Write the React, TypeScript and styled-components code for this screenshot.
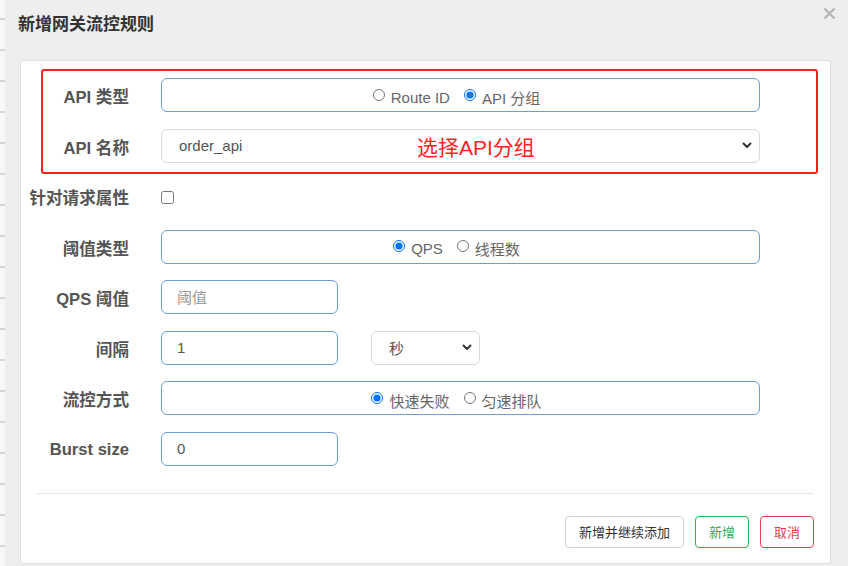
import React from 'react';
import styled, { createGlobalStyle, css } from 'styled-components';

const GlobalStyle = createGlobalStyle`
  html, body {
    margin: 0;
    padding: 0;
    background: #eeeeee;
  }
  * {
    box-sizing: border-box;
  }
  body {
    font-family: "Liberation Sans", "Noto Sans CJK SC", sans-serif;
    color: #555;
  }
`;

const Page = styled.div`
  display: flex;
  width: 848px;
  height: 566px;
  overflow: hidden;
`;

// the page behind the modal peeks out on the far left
const BackdropStrip = styled.div`
  width: 5px;
  flex-shrink: 0;
  background:
    repeating-linear-gradient(180deg, transparent 0 18px, #d3d6dc 18px 20px, transparent 20px 31px),
    #f8f8f8;
`;

const Modal = styled.div`
  flex: 1;
  display: flex;
  flex-direction: column;
  background: #eeeeee;
  padding: 0 17px 2px 15px;
`;

const Header = styled.div`
  height: 60px;
  display: flex;
  justify-content: space-between;
  align-items: flex-start;
`;

const Title = styled.h4`
  margin: 15px 0 0 -2px;
  font-size: 17px;
  line-height: 20px;
  font-weight: bold;
  color: #333;
`;

const CloseButton = styled.button`
  margin: 7px -5px 0 0;
  padding: 0;
  border: none;
  background: none;
  width: 13px;
  height: 13px;
  display: flex;
  cursor: pointer;
`;

const Card = styled.div`
  flex: 1;
  background: #fff;
  border: 1px solid #dedede;
  border-radius: 4px;
  padding: 17px 0 15px;
  display: flex;
  flex-direction: column;
`;

const Form = styled.div`
  display: flex;
  flex-direction: column;
  gap: 16.5px;
`;

const AnnotatedGroup = styled.div`
  position: relative;
  display: flex;
  flex-direction: column;
  gap: 16.5px;

  &::before {
    content: '';
    position: absolute;
    top: -9px;
    bottom: -11px;
    left: 20px;
    right: 12px;
    border: 2.5px solid #ff1f1f;
    border-radius: 3px;
    pointer-events: none;
  }
`;

const Row = styled.div`
  display: flex;
  align-items: center;
  height: 34px;
`;

const Label = styled.label`
  width: 108px;
  flex-shrink: 0;
  text-align: right;
  font-size: 16.6px;
  font-weight: bold;
  color: #555;
  margin-right: 32px;
  padding-top: 2px;
  white-space: nowrap;
`;

const controlBase = css`
  height: 34px;
  border-radius: 6px;
  background: #fff;
  font-family: "Liberation Sans", "Noto Sans CJK SC", sans-serif;
  font-size: 15px;
  color: #555;
`;

const RadioBox = styled.div`
  ${controlBase}
  width: 599px;
  border: 1px solid #6a9fd4;
  display: flex;
  justify-content: center;
  align-items: center;
  gap: 14px;
  padding: 4px 8px 0 0;
`;

const RadioItem = styled.label`
  display: flex;
  align-items: center;
  gap: 6px;
  color: #666;
  font-size: 15px;

  input {
    margin: 0 0 5px 0;
    width: 12px;
    height: 12px;
  }
`;

const TextInput = styled.input<{ $width?: number }>`
  ${controlBase}
  width: ${({ $width = 177 }) => $width}px;
  border: 1px solid #6a9fd4;
  padding: 0 15px;
  outline: none;

  &::placeholder {
    color: #9a9a9a;
  }
`;

const SelectField = styled.div<{ $width: number; $gap?: number }>`
  ${controlBase}
  position: relative;
  width: ${({ $width }) => $width}px;
  margin-left: ${({ $gap = 0 }) => $gap}px;
  border: 1px solid #d9d9d9;
  display: flex;
  align-items: center;
  justify-content: space-between;
  padding: 0 7px 0 17px;
`;

const SelectValue = styled.span`
  color: #555;
`;

const Annotation = styled.span`
  position: absolute;
  left: 255px;
  top: 50%;
  transform: translateY(-50%);
  color: #ff1f1f;
  font-size: 21px;
  white-space: nowrap;
`;

const Checkbox = styled.input`
  margin: 2px 0 0 0;
  width: 13px;
  height: 13px;
`;

const Divider = styled.hr`
  margin: 27px 16px 0 15px;
  border: none;
  border-top: 1px solid #e6e6e6;
`;

const Footer = styled.div`
  display: flex;
  justify-content: flex-end;
  gap: 11px;
  margin: 22px 16px 0 0;
`;

const Button = styled.button<{ $tone?: 'default' | 'success' | 'danger' }>`
  height: 32px;
  padding: 0 13px;
  background: #fff;
  border-radius: 4px;
  font-family: "Liberation Sans", "Noto Sans CJK SC", sans-serif;
  font-size: 13px;
  cursor: pointer;
  ${({ $tone = 'default' }) =>
    $tone === 'success'
      ? css`
          border: 1px solid #2fb050;
          color: #3aa655;
        `
      : $tone === 'danger'
      ? css`
          border: 1px solid #e0414f;
          color: #e0414f;
        `
      : css`
          border: 1px solid #cfcfcf;
          color: #333;
        `}
`;

const Chevron = () => (
  <svg width="10" height="7" viewBox="0 0 10 7">
    <path d="M1.5 1.5 L5 5 L8.5 1.5" fill="none" stroke="#333" strokeWidth="2" strokeLinecap="round" strokeLinejoin="round" />
  </svg>
);

const App: React.FC = () => {
  return (
    <Page>
      <GlobalStyle />
      <BackdropStrip />
      <Modal>
        <Header>
          <Title>新增网关流控规则</Title>
          <CloseButton aria-label="close">
            <svg width="13" height="13" viewBox="0 0 13 13">
              <path d="M1.5 1.5 L11.5 11.5 M11.5 1.5 L1.5 11.5" stroke="#b3b3b3" strokeWidth="2.2" />
            </svg>
          </CloseButton>
        </Header>
        <Card>
          <Form>
            <AnnotatedGroup>
              <Row>
                <Label>API 类型</Label>
                <RadioBox>
                  <RadioItem>
                    <input type="radio" name="apiType" />
                    Route ID
                  </RadioItem>
                  <RadioItem>
                    <input type="radio" name="apiType" defaultChecked />
                    API 分组
                  </RadioItem>
                </RadioBox>
              </Row>
              <Row>
                <Label>API 名称</Label>
                <SelectField $width={599}>
                  <SelectValue>order_api</SelectValue>
                  <Annotation>选择API分组</Annotation>
                  <Chevron />
                </SelectField>
              </Row>
            </AnnotatedGroup>
            <Row>
              <Label>针对请求属性</Label>
              <Checkbox type="checkbox" />
            </Row>
            <Row>
              <Label>阈值类型</Label>
              <RadioBox>
                <RadioItem>
                  <input type="radio" name="grade" defaultChecked />
                  QPS
                </RadioItem>
                <RadioItem>
                  <input type="radio" name="grade" />
                  线程数
                </RadioItem>
              </RadioBox>
            </Row>
            <Row>
              <Label>QPS 阈值</Label>
              <TextInput placeholder="阈值" />
            </Row>
            <Row>
              <Label>间隔</Label>
              <TextInput defaultValue="1" />
              <SelectField $width={109} $gap={33}>
                <SelectValue>秒</SelectValue>
                <Chevron />
              </SelectField>
            </Row>
            <Row>
              <Label>流控方式</Label>
              <RadioBox>
                <RadioItem>
                  <input type="radio" name="behavior" defaultChecked />
                  快速失败
                </RadioItem>
                <RadioItem>
                  <input type="radio" name="behavior" />
                  匀速排队
                </RadioItem>
              </RadioBox>
            </Row>
            <Row>
              <Label>Burst size</Label>
              <TextInput defaultValue="0" />
            </Row>
          </Form>
          <Divider />
          <Footer>
            <Button>新增并继续添加</Button>
            <Button $tone="success">新增</Button>
            <Button $tone="danger">取消</Button>
          </Footer>
        </Card>
      </Modal>
    </Page>
  );
};

export default App;
